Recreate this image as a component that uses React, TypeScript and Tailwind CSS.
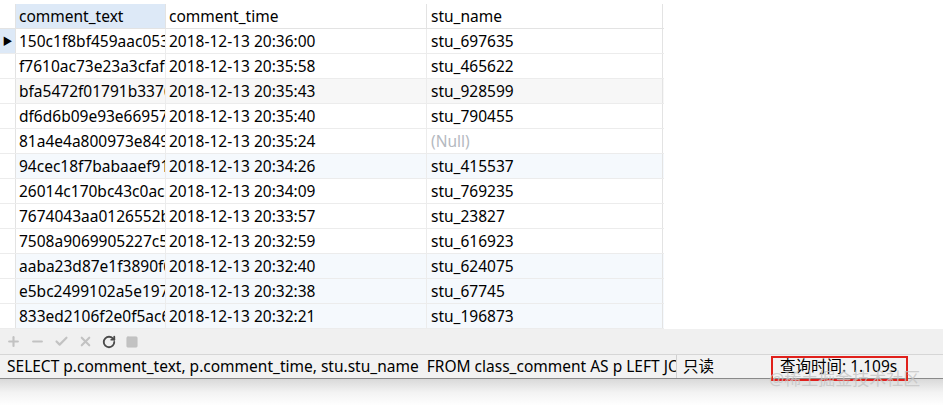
import React from 'react';
import { Plus, Minus, Check, X, RotateCw, Square } from 'lucide-react';

const rows: [string, string, string | null][] = [
  ['150c1f8bf459aac0536', '2018-12-13 20:36:00', 'stu_697635'],
  ['f7610ac73e23a3cfafb', '2018-12-13 20:35:58', 'stu_465622'],
  ['bfa5472f01791b33765', '2018-12-13 20:35:43', 'stu_928599'],
  ['df6d6b09e93e669573', '2018-12-13 20:35:40', 'stu_790455'],
  ['81a4e4a800973e8496', '2018-12-13 20:35:24', null],
  ['94cec18f7babaaef912', '2018-12-13 20:34:26', 'stu_415537'],
  ['26014c170bc43c0ac3', '2018-12-13 20:34:09', 'stu_769235'],
  ['7674043aa0126552b4', '2018-12-13 20:33:57', 'stu_23827'],
  ['7508a9069905227c5e', '2018-12-13 20:32:59', 'stu_616923'],
  ['aaba23d87e1f3890f6', '2018-12-13 20:32:40', 'stu_624075'],
  ['e5bc2499102a5e1972', '2018-12-13 20:32:38', 'stu_67745'],
  ['833ed2106f2e0f5ac6', '2018-12-13 20:32:21', 'stu_196873'],
];

const font = { fontFamily: '"Noto Sans", "Noto Sans CJK SC", sans-serif' };

export default function App() {
  return (
    <div className="w-[943px] h-[405px] bg-white overflow-hidden text-[15.5px] text-black" style={font}>
      <div className="h-[4px]" />
      {/* header */}
      <div className="flex h-[25px] w-[664px] border-b border-[#e3e3e3]">
        <div className="w-[16px] border-r border-[#e3e3e3]" />
        <div className="w-[150px] bg-[#dde9f7] border-r border-[#e3e3e3] pl-[3px] leading-[24px] whitespace-nowrap overflow-hidden">comment_text</div>
        <div className="w-[261px] border-r border-[#e3e3e3] pl-[3px] leading-[24px]">comment_time</div>
        <div className="w-[236px] border-r border-[#e3e3e3] pl-[4px] leading-[24px]">stu_name</div>
      </div>
      {rows.map((r, i) => {
        const bg = i === 2 ? 'bg-[#f7f7f7]' : i === 5 || i >= 9 ? 'bg-[#f5f9fd]' : 'bg-white';
        return (
          <div key={i} className={`flex h-[25px] w-[664px] border-b border-[#ececec] ${bg}`}>
            <div className={`w-[16px] border-r border-[#e3e3e3] flex items-center justify-center ${i === 0 ? 'bg-[#dde9f7]' : 'bg-white'}`}>
              {i === 0 && <span className="text-[10px] leading-none">▶</span>}
            </div>
            <div className="w-[150px] border-r border-[#ececec] pl-[3px] leading-[24px] whitespace-nowrap overflow-hidden">{r[0]}</div>
            <div className="w-[261px] border-r border-[#ececec] pl-[3px] leading-[24px] whitespace-nowrap">{r[1]}</div>
            <div className={`w-[236px] border-r border-[#e3e3e3] pl-[4px] leading-[24px] ${r[2] ? '' : 'text-[#b4b9c0]'}`}>{r[2] ?? '(Null)'}</div>
          </div>
        );
      })}
      {/* toolbar */}
      <div className="flex items-center h-[25px] bg-[#f0f0f0] pl-[6px] gap-[9px] text-[#c2c2c2]">
        <Plus size={15} strokeWidth={3.4} />
        <Minus size={15} strokeWidth={3.4} />
        <Check size={15} strokeWidth={3.4} />
        <X size={15} strokeWidth={3.4} />
        <RotateCw size={14} strokeWidth={3.2} className="text-[#4a4a4a]" />
        <Square size={14} fill="#c2c2c2" strokeWidth={1} />
      </div>
      {/* status bar */}
      <div className="flex h-[25px] bg-[#f2f2f2] border-t border-[#d6d6d6] border-b border-b-[#8a8a8a] leading-[23px]">
        <div className="w-[677px] pl-[7px] border-r border-[#d0d0d0] whitespace-nowrap overflow-hidden">
          SELECT p.comment_text, p.comment_time, stu.stu_name&nbsp; FROM class_comment AS p LEFT JOIN
        </div>
        <div className="w-[94px] pl-[6px]">只读</div>
        <div className="relative pl-[9px]">
          查询时间: 1.109s
          <div className="absolute left-0 top-[1px] w-[137px] h-[25px] border-2 border-[#e0201b]" />
          <div className="absolute left-[-2px] top-[12px] whitespace-nowrap text-[17px] text-[#c4c4c4]/80">@稀土掘金技术社区</div>
        </div>
      </div>
      <div className="h-[27px] bg-gradient-to-b from-[#d9d9d9] via-[#f3f3f3] to-white" />
    </div>
  );
}
